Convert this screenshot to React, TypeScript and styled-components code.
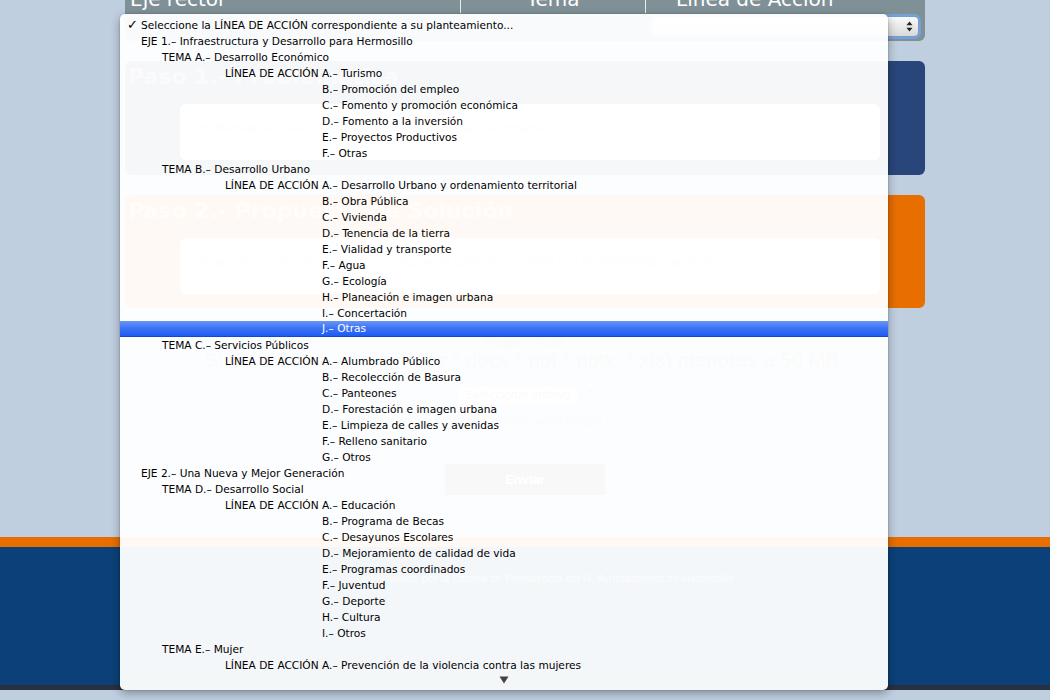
import React from "react";
import styled, { createGlobalStyle, css } from "styled-components";

const GlobalStyle = createGlobalStyle`
  html, body { margin: 0; padding: 0; }
  body { background: #bfcfdf; font-family: "DejaVu Sans", "Liberation Sans", sans-serif; overflow: hidden; }
`;

const Page = styled.div`
  position: relative;
  height: 700px;
  overflow: hidden;
  display: flex;
  flex-direction: column;
`;

const Content = styled.div`
  height: 537px;
  width: 800px;
  margin: 0 auto;
  display: flex;
  flex-direction: column;
`;

const HeaderTable = styled.div`
  margin-top: -14px;
  background: #7f9197;
  border-radius: 0 0 6px 6px;
  display: flex;
  flex-direction: column;
`;

const HeaderRow = styled.div`
  display: grid;
  grid-template-columns: 335px 185px 280px;
  height: 27px;
`;

const HeaderCell = styled.div<{ $align: string; $pad: number; $line?: boolean }>`
  color: #fff;
  font-family: "DejaVu Sans", sans-serif;
  font-size: 20px;
  line-height: 27px;
  text-align: ${(p) => p.$align};
  padding-left: ${(p) => p.$pad}px;
  border-left: ${(p) => (p.$line ? "1px solid #e8eef0" : "none")};
  white-space: nowrap;
`;

const SelectRow = styled.div`
  height: 28px;
  display: flex;
  justify-content: flex-end;
  align-items: flex-start;
  padding: 4px 7px 0 0;
  box-sizing: border-box;
`;

const FakeSelect = styled.div`
  width: 266px;
  height: 19px;
  border-radius: 4px;
  background: linear-gradient(#fafafa, #d9d9d9);
  box-shadow: 0 0 0 1px #6f9ee0, 0 0 0 3px rgba(120, 165, 230, 0.75);
  display: flex;
  justify-content: flex-end;
  align-items: center;
  padding-right: 5px;
  box-sizing: border-box;
`;

const Panel = styled.div<{ $bg: string; $gap: number; $h: number }>`
  margin-top: ${(p) => p.$gap}px;
  height: ${(p) => p.$h}px;
  background: ${(p) => p.$bg};
  border-radius: 6px;
  padding: 2px 0 0 3px;
  box-sizing: border-box;
  display: flex;
  flex-direction: column;
`;

const PanelTitle = styled.div`
  color: rgba(255, 255, 255, 0.55);
  font-family: "DejaVu Sans", sans-serif;
  font-weight: bold;
  font-size: 22px;
  line-height: 28px;
`;

const TextBox = styled.div`
  margin: 13px 0 0 52px;
  width: 700px;
  height: 56px;
  background: #fff;
  border-radius: 6px;
  color: #c4c4c4;
  font-family: "Liberation Sans", sans-serif;
  font-size: 13px;
  padding: 16px 15px;
  box-sizing: border-box;
`;

const Upload = styled.div`
  flex: 1;
  display: flex;
  flex-direction: column;
  align-items: center;
  padding-top: 27px;
  font-family: "Liberation Sans", sans-serif;
  color: #8a8a8a;
`;

const UploadLabel = styled.div`
  font-size: 13px;
  line-height: 14px;
`;

const UploadInfo = styled.div`
  font-size: 20.5px;
  line-height: 22px;
`;

const FileRow = styled.div`
  margin-top: 15px;
  display: flex;
  gap: 8px;
  align-items: flex-start;
`;

const FileButton = styled.div`
  height: 17px;
  padding: 0 8px;
  border: 1px solid #bbb;
  border-radius: 3px;
  background: #f4f4f4;
  font-size: 12px;
  line-height: 17px;
`;

const FileNote = styled.div`
  margin-top: 9px;
  font-size: 12px;
  line-height: 14px;
`;

const SubmitButton = styled.div`
  margin-top: 36px;
  width: 160px;
  height: 31px;
  background: #6a6a6a;
  color: #fff;
  font-size: 13px;
  font-weight: bold;
  line-height: 31px;
  text-align: center;
`;

const Footer = styled.div`
  border-top: 10px solid #e86e00;
  background: #0b4178;
  height: 148px;
  display: flex;
  justify-content: center;
  padding: 25px 0 0 40px;
  box-sizing: border-box;
  color: rgba(255, 255, 255, 0.6);
  font-family: "Liberation Sans", sans-serif;
  font-size: 11px;
`;

const BottomBar = styled.div`
  height: 5px;
  background: #27303c;
`;

/* ---------- Dropdown menu ---------- */

const Menu = styled.div`
  position: absolute;
  left: 120px;
  top: 14px;
  width: 768px;
  height: 676px;
  box-sizing: border-box;
  padding-top: 3px;
  background: rgba(255, 255, 255, 0.955);
  border-radius: 5px;
  box-shadow: 0 3px 10px rgba(0, 0, 0, 0.35), 0 0 0 1px rgba(0, 0, 0, 0.06);
  display: flex;
  flex-direction: column;
  font-family: "DejaVu Sans", "Liberation Sans", sans-serif;
  font-size: 10.6px;
`;

const Row = styled.div<{ $selected?: boolean }>`
  height: 16px;
  line-height: 16px;
  display: flex;
  white-space: nowrap;
  color: #000;
  box-sizing: border-box;
  ${(p) =>
    p.$selected &&
    css`
      color: #fff;
      background: linear-gradient(#6a94f7, #3a72f5 50%, #1d5cf2);
      border-bottom: 1px solid #1446d6;
      line-height: 15px;
    `}
`;

const Lead = styled.span<{ $w: number; $right?: boolean }>`
  width: ${(p) => p.$w}px;
  flex: none;
  text-align: ${(p) => (p.$right ? "right" : "left")};
  white-space: pre;
`;

const Check = styled.span`
  display: inline-block;
  padding-left: 7px;
  font-size: 13px;
  font-weight: bold;
`;

const MoreArrow = styled.div`
  flex: 1;
  display: flex;
  justify-content: center;
  align-items: center;
  padding-bottom: 3px;
`;

type Item = { lvl: 0 | 1 | 2; text: string; prefix?: string; check?: boolean; sel?: boolean };

const L = "LÍNEA DE ACCIÓN\u00a0";
const items: Item[] = [
  { lvl: 0, text: "Seleccione la LÍNEA DE ACCIÓN correspondiente a su planteamiento...", check: true },
  { lvl: 0, text: "EJE 1.– Infraestructura y Desarrollo para Hermosillo" },
  { lvl: 1, text: "TEMA A.– Desarrollo Económico" },
  { lvl: 2, prefix: L, text: "A.– Turismo" },
  { lvl: 2, text: "B.– Promoción del empleo" },
  { lvl: 2, text: "C.– Fomento y promoción económica" },
  { lvl: 2, text: "D.– Fomento a la inversión" },
  { lvl: 2, text: "E.– Proyectos Productivos" },
  { lvl: 2, text: "F.– Otras" },
  { lvl: 1, text: "TEMA B.– Desarrollo Urbano" },
  { lvl: 2, prefix: L, text: "A.– Desarrollo Urbano y ordenamiento territorial" },
  { lvl: 2, text: "B.– Obra Pública" },
  { lvl: 2, text: "C.– Vivienda" },
  { lvl: 2, text: "D.– Tenencia de la tierra" },
  { lvl: 2, text: "E.– Vialidad y transporte" },
  { lvl: 2, text: "F.– Agua" },
  { lvl: 2, text: "G.– Ecología" },
  { lvl: 2, text: "H.– Planeación e imagen urbana" },
  { lvl: 2, text: "I.– Concertación" },
  { lvl: 2, text: "J.– Otras", sel: true },
  { lvl: 1, text: "TEMA C.– Servicios Públicos" },
  { lvl: 2, prefix: L, text: "A.– Alumbrado Público" },
  { lvl: 2, text: "B.– Recolección de Basura" },
  { lvl: 2, text: "C.– Panteones" },
  { lvl: 2, text: "D.– Forestación e imagen urbana" },
  { lvl: 2, text: "E.– Limpieza de calles y avenidas" },
  { lvl: 2, text: "F.– Relleno sanitario" },
  { lvl: 2, text: "G.– Otros" },
  { lvl: 0, text: "EJE 2.– Una Nueva y Mejor Generación" },
  { lvl: 1, text: "TEMA D.– Desarrollo Social" },
  { lvl: 2, prefix: L, text: "A.– Educación" },
  { lvl: 2, text: "B.– Programa de Becas" },
  { lvl: 2, text: "C.– Desayunos Escolares" },
  { lvl: 2, text: "D.– Mejoramiento de calidad de vida" },
  { lvl: 2, text: "E.– Programas coordinados" },
  { lvl: 2, text: "F.– Juventud" },
  { lvl: 2, text: "G.– Deporte" },
  { lvl: 2, text: "H.– Cultura" },
  { lvl: 2, text: "I.– Otros" },
  { lvl: 1, text: "TEMA E.– Mujer" },
  { lvl: 2, prefix: L, text: "A.– Prevención de la violencia contra las mujeres" },
];

const leadWidth = [21, 42, 202];

function MenuRow({ item }: { item: Item }) {
  return (
    <Row $selected={item.sel}>
      <Lead $w={leadWidth[item.lvl]} $right={item.lvl === 2}>
        {item.check ? <Check>✓</Check> : item.prefix ?? ""}
      </Lead>
      <span>{item.text}</span>
    </Row>
  );
}

export default function App() {
  return (
    <>
      <GlobalStyle />
      <Page>
        <Content>
          <HeaderTable>
            <HeaderRow>
              <HeaderCell $align="left" $pad={5}>Eje rector</HeaderCell>
              <HeaderCell $align="center" $pad={0} $line>Tema</HeaderCell>
              <HeaderCell $align="left" $pad={30} $line>Línea de Acción</HeaderCell>
            </HeaderRow>
            <SelectRow>
              <FakeSelect>
                <svg width="7" height="11" viewBox="0 0 7 11">
                  <path d="M3.5 0.5 L6.5 4.3 H0.5 Z" fill="#222" />
                  <path d="M3.5 10.5 L6.5 6.7 H0.5 Z" fill="#222" />
                </svg>
              </FakeSelect>
            </SelectRow>
          </HeaderTable>

          <Panel $bg="#29467a" $gap={20} $h={114}>
            <PanelTitle>Paso 1.- Problemática</PanelTitle>
            <TextBox>Problemática: Describe brevemente el problema que observas</TextBox>
          </Panel>

          <Panel $bg="#e86e00" $gap={20} $h={113}>
            <PanelTitle>Paso 2.- Propuesta de Solución</PanelTitle>
            <TextBox>Propuesta o solución: Describe tu propuesta para dar solución a la problemática planteada</TextBox>
          </Panel>

          <Upload>
            <UploadLabel>Imagen oficial</UploadLabel>
            <UploadInfo>Sube archivos (*.jpg, *.doc,*.docx,*.ppt,*.pptx, *.xls) menores a 50 MB.</UploadInfo>
            <FileRow>
              <FileButton>Seleccionar archivo</FileButton>
              <span>*</span>
            </FileRow>
            <FileNote>Ningún archivo seleccionado</FileNote>
            <SubmitButton>Enviar</SubmitButton>
          </Upload>
        </Content>

        <Footer>Desarrollado por la Oficina de Presidencia del H. Ayuntamiento de Hermosillo</Footer>
        <BottomBar />

        <Menu>
          {items.map((it, i) => (
            <MenuRow key={i} item={it} />
          ))}
          <MoreArrow>
            <svg width="10" height="8" viewBox="0 0 10 8">
              <path d="M0.5 0.5 H9.5 L5 7.5 Z" fill="#444" />
            </svg>
          </MoreArrow>
        </Menu>
      </Page>
    </>
  );
}
